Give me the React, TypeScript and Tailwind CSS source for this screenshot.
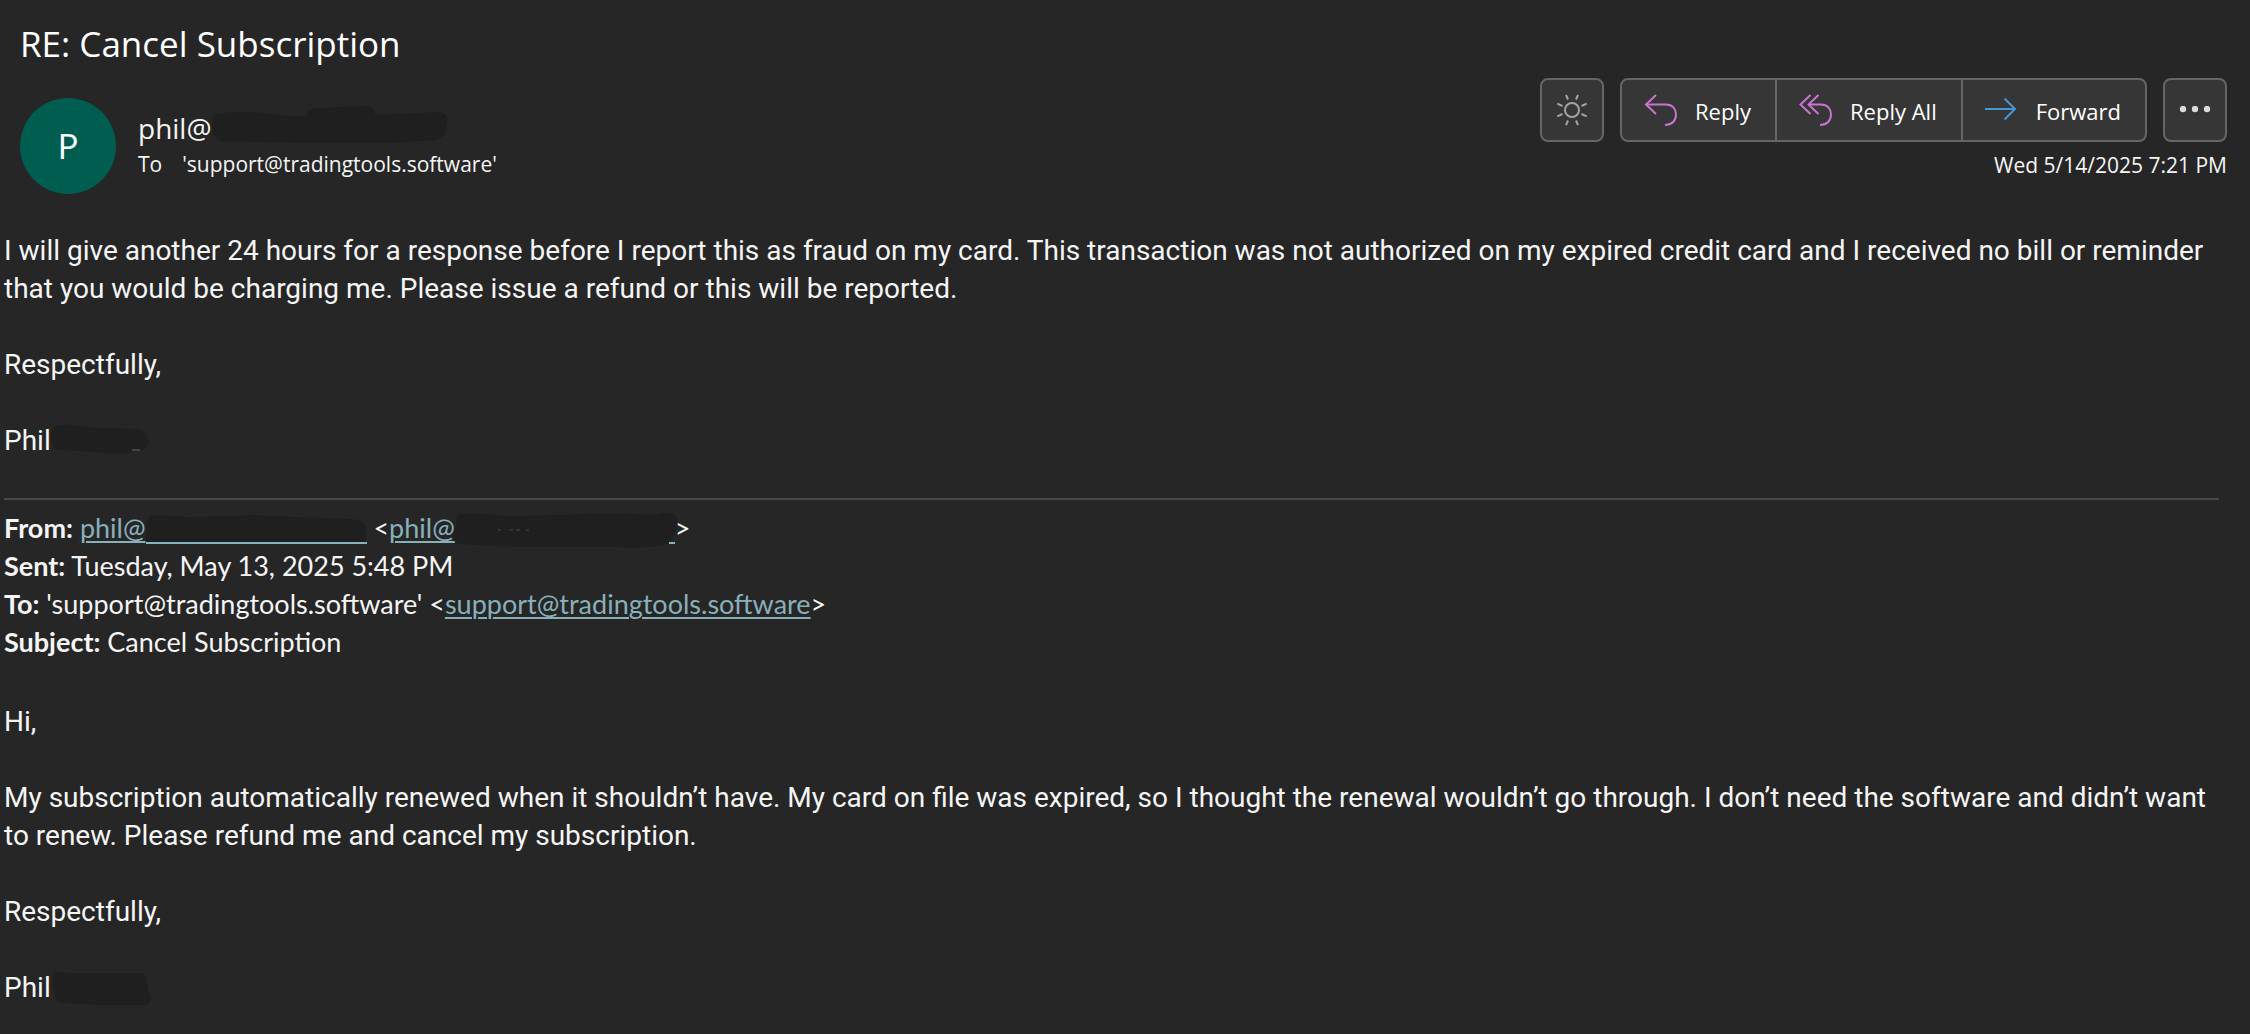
import React from "react";

interface ActionButtonProps {
  label: string;
  icon: React.ReactNode;
}

function ActionButton({ label, icon }: ActionButtonProps) {
  return (
    <button className="flex items-center gap-[17px] pl-[22px] pr-6 pt-0.5 hover:bg-[#404040]">
      {icon}
      <span>{label}</span>
    </button>
  );
}

function ReplyIcon() {
  return (
    <svg width="34" height="34" viewBox="0 0 34 34" fill="none" stroke="#c974cf" strokeWidth="2" className="-mt-1">
      <path d="M12 3 L2 12.500 L12 22" />
      <path d="M2 12.500 H22 C28.500 12.500 32 17 32 22.500 C32 28.500 28 33 21 33" />
    </svg>
  );
}

function ReplyAllIcon() {
  return (
    <svg width="34" height="34" viewBox="0 0 34 34" fill="none" stroke="#c974cf" strokeWidth="2" className="-mt-1">
      <path d="M11.500 3 L1.500 12.500 L11.500 22" />
      <path d="M19.500 3 L9.500 12.500 L19.500 22" />
      <path d="M9.500 12.500 H22 C28.500 12.500 32 17 32 22.500 C32 28.500 28 33 21 33" />
    </svg>
  );
}

function ForwardIcon() {
  return (
    <svg width="34" height="34" viewBox="0 0 34 34" fill="none" stroke="#4596d1" strokeWidth="2" className="-mt-1">
      <path d="M0 17 H30" />
      <path d="M19.500 6.500 L30 17 L19.500 27.500" />
    </svg>
  );
}

function SunIcon() {
  return (
    <svg width="32" height="32" viewBox="0 0 32 32" fill="none" stroke="#a3a3a3" strokeWidth="2">
      <circle cx="16" cy="16" r="7" />
      <path d="M12 5.500 L10 0.900 M20 5.500 L22 0.900 M6.500 12 L1.300 9.700 M25.500 12 L30.700 9.700 M6.500 20 L1.300 22.300 M25.500 20 L30.700 22.300 M12 26.500 L10 31.100 M20 26.500 L22 31.100" />
    </svg>
  );
}

// Marker stroke that hides part of a name or an address
interface MarkerProps {
  width: number;
  height?: number;
  d: string;
  children?: React.ReactNode;
}

function Marker({ width, height = 38, d, children }: MarkerProps) {
  return (
    <svg
      width={width}
      height={height}
      viewBox={`0 0 ${width} ${height}`}
      className="inline-block overflow-visible align-top"
      aria-hidden="true"
    >
      <path d={d} fill="#1f1f1f" />
      {children}
    </svg>
  );
}

const linkClass = "text-[#88b0bb] underline decoration-2 underline-offset-[3px]";

export default function App() {
  return (
    <div className="min-h-screen bg-[#262626] text-[#f5f5f5] font-['Open_Sans',sans-serif]">
      <header className="pl-5 pr-[23px] pt-5">
        <h1 className="text-[35px] leading-[48px] text-white">RE: Cancel Subscription</h1>
        <div className="flex justify-between pt-[10px]">
          <div className="flex gap-[22px]">
            <div className="mt-5 flex size-24 items-center justify-center rounded-full bg-[#005e50] text-[35px] text-white">
              P
            </div>
            <div className="mt-[29px]">
              <p className="text-[28px] leading-[42px]">
                phil@
                <Marker
                  width={236}
                  height={42}
                  d="M3 7 Q30 3 58 7 Q80 10 95 9 Q94 2 104 1 L155 -1 Q164 0 163 8 L228 5 Q238 7 235 18 Q234 32 222 33 L180 36 L90 36 L8 34 Q1 32 0 18 Q0 9 3 7 Z"
                />
              </p>
              <p className="flex gap-5 text-[21px] leading-[30px]">
                <span>To</span>
                <span>'support@tradingtools.software'</span>
              </p>
            </div>
          </div>

          <div className="flex flex-col items-end gap-2">
            <div className="flex h-16 gap-4 text-[22px] text-white">
              <button
                aria-label="Switch background"
                className="flex w-16 items-center justify-center rounded-lg border-2 border-[#666666] bg-[#363636]"
              >
                <SunIcon />
              </button>
              <div className="flex divide-x-2 divide-[#666666] overflow-hidden rounded-lg border-2 border-[#666666] bg-[#363636]">
                <ActionButton label="Reply" icon={<ReplyIcon />} />
                <ActionButton label="Reply All" icon={<ReplyAllIcon />} />
                <ActionButton label="Forward" icon={<ForwardIcon />} />
              </div>
              <button
                aria-label="More actions"
                className="flex w-16 items-center justify-center rounded-lg border-2 border-[#666666] bg-[#363636]"
              >
                <svg width="32" height="8" viewBox="0 0 32 8" fill="#dadada">
                  <circle cx="4" cy="3" r="3.200" />
                  <circle cx="16" cy="3" r="3.200" />
                  <circle cx="28" cy="3" r="3.200" />
                </svg>
              </button>
            </div>
            <time className="text-[21px] leading-[30px]">Wed 5/14/2025 7:21 PM</time>
          </div>
        </div>
      </header>

      <main className="mt-[38px] pl-1 pr-[31px]">
        <section className="space-y-[38px] text-[28px] leading-[38px] font-['Roboto',sans-serif]">
          <p>
            I will give another 24 hours for a response before I report this as fraud on my card. This transaction was
            not authorized on my expired credit card and I received no bill or reminder that you would be charging me.
            Please issue a refund or this will be reported.
          </p>
          <p>Respectfully,</p>
          <p>
            Phil
            <Marker
              width={98}
              d="M3 5 Q8 2 22 3 L45 6 L88 7 Q94 8 95 14 L98 20 Q96 27 90 28 L78 31 Q70 33 45 30 L8 28 Q1 27 0 15 Q0 8 3 5 Z"
            >
              <path d="M81 28 H89" stroke="#6b6b6b" strokeWidth="1" />
            </Marker>
          </p>
        </section>

        <hr className="mt-[38px] border-t-2 border-[#494949]" />

        <section className="mt-[9px] text-[27px] leading-[38px] font-['Lato',sans-serif]">
          <p>
            <b>From:</b>{" "}
            <a href="mailto:phil" className={linkClass}>
              phil@
              <Marker
                width={221}
                d="M4 7 Q10 5 40 8 L95 7 Q105 5 120 7 L205 10 Q220 11 220 20 V33 H0 V15 Z"
              >
                <path d="M0 34 H221" stroke="#88b0bb" strokeWidth="2" />
              </Marker>
            </a>{" "}
            &lt;
            <a href="mailto:phil" className={linkClass}>
              phil@
              <Marker
                width={220}
                d="M4 5 Q12 3 50 7 L110 6 Q150 3 200 6 Q220 0 222 10 Q222 28 212 35 Q200 40 160 38 L60 38 L5 35 Q-4 33 -1 22 Q3 14 1 9 Z"
              >
                <path d="M43 21 H46 M54 21 H58 M61 21 H65 M71 21 H74" stroke="#484848" strokeWidth="1" />
                <path d="M214 34 H220" stroke="#88b0bb" strokeWidth="2" />
              </Marker>
            </a>
            &gt;
          </p>
          <p>
            <b>Sent:</b> Tuesday, May 13, 2025 5:48 PM
          </p>
          <p>
            <b>To:</b> 'support@tradingtools.software' &lt;
            <a href="mailto:support@tradingtools.software" className={linkClass}>
              support@tradingtools.software
            </a>
            &gt;
          </p>
          <p>
            <b>Subject:</b> Cancel Subscription
          </p>
        </section>

        <section className="mt-[42px] space-y-[38px] text-[28px] leading-[38px] font-['Roboto',sans-serif]">
          <p>Hi,</p>
          <p>
            My subscription automatically renewed when it shouldn’t have. My card on file was expired, so I thought the
            renewal wouldn’t go through. I don’t need the software and didn’t want to renew. Please refund me and cancel
            my subscription.
          </p>
          <p>Respectfully,</p>
          <p>
            Phil
            <Marker
              width={100}
              d="M3 4 Q6 1 18 4 L90 4 Q97 5 96 14 L97 22 L100 28 Q100 36 92 36 L50 36 L10 34 Q3 32 3 22 Q-1 10 3 4 Z"
            />
          </p>
        </section>
      </main>
    </div>
  );
}
